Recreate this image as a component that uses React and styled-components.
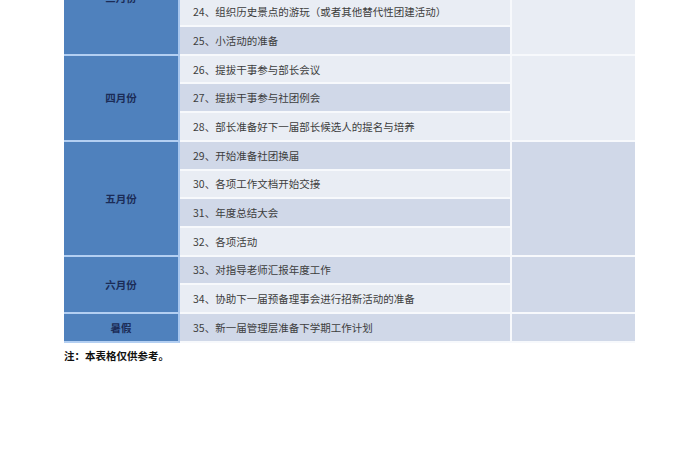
import React from "react";
import styled, { createGlobalStyle } from "styled-components";

const Global = createGlobalStyle`
  html, body { margin: 0; padding: 0; background: #ffffff; }
  body { font-family: "Noto Sans CJK SC", "Noto Sans", sans-serif; }
`;

const Page = styled.div`
  padding-left: 64px;
  width: 571px;
`;

const Table = styled.div`
  margin-top: -59px;
  display: flex;
  flex-direction: column;
  width: 571px;
`;

const Block = styled.div`
  display: grid;
  grid-template-columns: 116px 332px 123px;
  grid-template-rows: repeat(${(p) => p.$rows}, 28.7px);
`;

const Month = styled.div`
  grid-column: 1;
  grid-row: 1 / span ${(p) => p.$rows};
  background: #4f81bd;
  border-right: 2px solid #a7c6ee;
  border-bottom: 2px solid #b3cff2;
  box-sizing: border-box;
  display: flex;
  align-items: center;
  justify-content: center;
  color: #1b2c57;
  font-size: 10.5px;
  font-weight: 700;
`;

const Item = styled.div`
  grid-column: 2;
  background: ${(p) => (p.$dark ? "#d0d8e8" : "#e9edf4")};
  border-right: 2px solid #f7f9fc;
  border-bottom: 2px solid #f7f9fc;
  box-sizing: border-box;
  display: flex;
  align-items: center;
  padding-left: 13px;
  color: #3d3d3d;
  font-size: 10.5px;
  white-space: nowrap;
`;

const Note = styled.div`
  grid-column: 3;
  grid-row: 1 / span ${(p) => p.$rows};
  background: ${(p) => (p.$dark ? "#d0d8e8" : "#e9edf4")};
  border-bottom: 2px solid #f7f9fc;
  box-sizing: border-box;
`;

const Footnote = styled.div`
  margin-top: 5px;
  font-size: 10.5px;
  font-weight: 700;
  color: #111;
`;

const blocks = [
  {
    month: "三月份",
    note: false,
    items: [
      [22, "社团日常活动的开展"],
      [23, "部门工作总结与交流"],
      [24, "组织历史景点的游玩（或者其他替代性团建活动）"],
      [25, "小活动的准备"],
    ],
  },
  {
    month: "四月份",
    note: false,
    items: [
      [26, "提拔干事参与部长会议"],
      [27, "提拔干事参与社团例会"],
      [28, "部长准备好下一届部长候选人的提名与培养"],
    ],
  },
  {
    month: "五月份",
    note: true,
    items: [
      [29, "开始准备社团换届"],
      [30, "各项工作文档开始交接"],
      [31, "年度总结大会"],
      [32, "各项活动"],
    ],
  },
  {
    month: "六月份",
    note: true,
    items: [
      [33, "对指导老师汇报年度工作"],
      [34, "协助下一届预备理事会进行招新活动的准备"],
    ],
  },
  {
    month: "暑假",
    note: true,
    items: [[35, "新一届管理层准备下学期工作计划"]],
  },
];

export default function App() {
  return (
    <>
      <Global />
      <Page>
        <Table>
          {blocks.map((b) => (
            <Block key={b.month} $rows={b.items.length}>
              <Month $rows={b.items.length}>{b.month}</Month>
              {b.items.map(([n, t], i) => (
                <Item
                  key={n}
                  $dark={n % 2 === 1}
                  style={{ gridRow: i + 1 }}
                >
                  {n}、{t}
                </Item>
              ))}
              <Note $rows={b.items.length} $dark={b.note} />
            </Block>
          ))}
        </Table>
        <Footnote>注：本表格仅供参考。</Footnote>
      </Page>
    </>
  );
}
